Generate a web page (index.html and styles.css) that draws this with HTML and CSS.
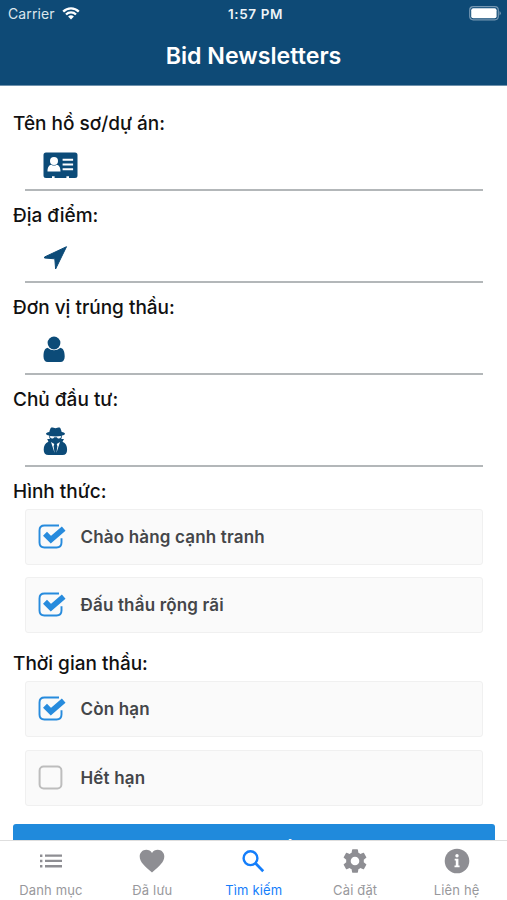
FILE: index.html
```html
<!DOCTYPE html>
<html lang="vi">
<head>
<meta charset="utf-8">
<meta name="viewport" content="width=device-width, initial-scale=1">
<title>Bid Newsletters</title>
<link rel="stylesheet" href="styles.css">
</head>
<body>
<div class="app">
  <header class="header">
    <div class="status">
      <div class="carrier"><span>Carrier</span>
        <svg width="18" height="13" viewBox="0 0 18 13" fill="none" stroke="#fff" stroke-width="2.3"><path d="M1.2 4.6a11 11 0 0 1 15.6 0M4 7.5a7 7 0 0 1 10 0"/><path d="M6.1 9.6a4.1 4.1 0 0 1 5.8 0L9 12.5z" fill="#fff" stroke="none"/></svg>
      </div>
      <time>1:57 PM</time>
      <svg class="battery" width="32" height="15" viewBox="0 0 32 15"><rect x=".7" y=".7" width="28.6" height="13.1" rx="3.5" fill="none" stroke="#7597b2" stroke-width="1.2"/><rect x="2.2" y="2.2" width="25.4" height="10" rx="2" fill="#fff"/><path d="M30.5 5v4.5q1.3-.6 1.3-2.2T30.5 5z" fill="#7597b2"/></svg>
    </div>
    <h1>Bid Newsletters</h1>
  </header>

  <main class="content">
    <div class="field"><label class="label">Tên hồ sơ/dự án:</label>
      <div class="input"><svg width="35" height="27" viewBox="0 0 35 27"><path fill="#0c4b78" d="M3 .5h29q2.500 0 2.500 2.500v20.500Q34.500 26 32 26h-6v-1.800h-2.600V26H11.600v-1.800H9V26H3Q.5 26 .5 23.500V3Q.5.5 3 .5z"/><g fill="#fff"><circle cx="11" cy="9" r="4"/><path d="M4.500 19.500c0-4.200 1.500-6.600 3.800-6.800q2.700 1.700 5.400 0c2.300.2 3.800 2.600 3.800 6.800z"/><path d="M19.600 6.800h10.500v2H19.600zM19.600 11.500h10.500v2H19.600zM19.600 16.200h10.500v2H19.600z"/></g></svg></div></div>
    <div class="field"><label class="label">Địa điểm:</label>
      <div class="input"><svg width="25" height="25" viewBox="0 0 25 25"><path fill="#0c4b78" stroke="#0c4b78" stroke-width="1" stroke-linejoin="round" d="M23.500 1.700 12.600 24 11.800 13.800 1.500 13 1.500 12z"/></svg></div></div>
    <div class="field"><label class="label">Đơn vị trúng thầu:</label>
      <div class="input"><svg width="23" height="27" viewBox="0 0 23 27"><g fill="#0c4b78"><circle cx="11" cy="7" r="6.400"/><path d="M4.500 11.700q6.500 5.300 13 0c3 .8 4.200 4 4.200 8.800 0 3.500-1.500 5.500-4.300 5.500H4.800C2 26 .5 24 .5 20.500c0-4.800 1-8 4-8.800z"/></g></svg></div></div>
    <div class="field"><label class="label">Chủ đầu tư:</label>
      <div class="input"><svg width="25" height="29" viewBox="0 0 25 29"><path fill="#0c4b78" d="M8 .8c1-.8 3 .4 4.500.4S16 0 17 .8c.8.900 1.300 2.700 1.700 4.200 2 .4 3.300 1 3.300 1.700 0 .9-1.500 1.500-3.300 2 .3 1.300 0 2.300-.5 3.300H21l-1.500 2.800c3.200 1.200 4.600 4 4.600 8 0 3.500-1.500 5.200-4.600 5.200h-14C2.300 28 .7 26.300.7 22.800c0-4 1.500-6.800 4.700-8L4.200 12H7c-.6-1-.9-2-.6-3.300C4.500 8.200 3 7.600 3 6.700 3 6 4.300 5.400 6.300 5 6.700 3.500 7.200 1.700 8 .8z"/><path fill="#fff" d="M7 9q5.500.8 11 0l-.3 1.800c-1.300 1.200-3.200 1-3.900-.6h-2.600c-.7 1.600-2.600 1.800-3.900.6zM8 15l3.300 2.100-.7 2.200 1 6.700zM17 15l-3.300 2.100.7 2.200-1 6.700z"/></svg></div></div>

    <section class="group"><h2 class="label">Hình thức:</h2>
      <div class="option"><svg width="29" height="26" viewBox="0 0 29 26"><path d="M21 1.500H6.500q-5 0-5 5v12q0 5 5 5h12q5 0 5-5v-4.200" fill="none" stroke="#278bdd" stroke-width="1.900"/><path d="m7 9.800 5.900 5.900L25.700 4.600" fill="none" stroke="#278bdd" stroke-width="5.600"/></svg><span>Chào hàng cạnh tranh</span></div>
      <div class="option"><svg width="29" height="26" viewBox="0 0 29 26"><path d="M21 1.500H6.500q-5 0-5 5v12q0 5 5 5h12q5 0 5-5v-4.200" fill="none" stroke="#278bdd" stroke-width="1.900"/><path d="m7 9.800 5.900 5.900L25.700 4.600" fill="none" stroke="#278bdd" stroke-width="5.600"/></svg><span>Đấu thầu rộng rãi</span></div>
    </section>
    <section class="group"><h2 class="label">Thời gian thầu:</h2>
      <div class="option"><svg width="29" height="26" viewBox="0 0 29 26"><path d="M21 1.500H6.500q-5 0-5 5v12q0 5 5 5h12q5 0 5-5v-4.200" fill="none" stroke="#278bdd" stroke-width="1.900"/><path d="m7 9.800 5.900 5.900L25.700 4.600" fill="none" stroke="#278bdd" stroke-width="5.600"/></svg><span>Còn hạn</span></div>
      <div class="option"><svg width="29" height="26" viewBox="0 0 29 26"><rect x="1.600" y="1.600" width="21.800" height="21.800" rx="4" fill="none" stroke="#bdbdbd" stroke-width="2"/></svg><span>Hết hạn</span></div>
    </section>
    <button class="submit">TÌM KIẾM</button>
  </main>

  <nav class="tabs">
    <a class="tab"><svg width="28" height="28" viewBox="0 0 28 28" fill="#8e8e93"><path d="M3 7.500h2.400v2.400H3zM3 12.800h2.400v2.400H3zM3 18.100h2.400v2.400H3zM8 7.500h17v2.300H8zM8 12.800h17v2.300H8zM8 18.100h17v2.300H8z"/></svg><span>Danh mục</span></a>
    <a class="tab"><svg width="28" height="28" viewBox="0 0 28 28" fill="#8e8e93"><path d="M14 25.500C7 19.500 1.700 15 1.700 9.500c0-4 3-6.800 6.500-6.800 2.500 0 4.600 1.200 5.800 3.200 1.200-2 3.300-3.200 5.800-3.200 3.600 0 6.500 2.800 6.500 6.800 0 5.500-5.300 10-12.300 16z"/></svg><span>Đã lưu</span></a>
    <a class="tab active"><svg width="28" height="28" viewBox="0 0 28 28" fill="none" stroke="#147efb"><circle cx="10.500" cy="11.200" r="6.900" stroke-width="2.400"/><path d="m15.500 16.300 7.700 7.900" stroke-width="2.700"/></svg><span>Tìm kiếm</span></a>
    <a class="tab"><svg width="28" height="28" viewBox="0 0 24 24" fill="#8e8e93"><path fill-rule="evenodd" d="M19.500 13a7.500 7.500 0 0 0 0-2l2.100-1.700a.5.5 0 0 0 .1-.6l-2-3.500a.5.5 0 0 0-.6-.2l-2.500 1a7.500 7.500 0 0 0-1.700-1l-.4-2.600a.5.5 0 0 0-.5-.4h-4a.5.5 0 0 0-.5.400L9.100 5a7.500 7.500 0 0 0-1.700 1l-2.500-1a.5.5 0 0 0-.6.2l-2 3.500a.5.5 0 0 0 .1.600L4.500 11a7.500 7.500 0 0 0 0 2l-2.100 1.700a.5.5 0 0 0-.1.600l2 3.500a.5.5 0 0 0 .6.200l2.500-1a7.500 7.500 0 0 0 1.700 1l.4 2.600a.5.5 0 0 0 .5.400h4a.5.5 0 0 0 .5-.4l.4-2.600a7.500 7.500 0 0 0 1.700-1l2.500 1a.5.5 0 0 0 .6-.2l2-3.500a.5.5 0 0 0-.1-.6zM12 15.700a3.700 3.700 0 1 1 0-7.400 3.700 3.700 0 0 1 0 7.400z"/></svg><span>Cài đặt</span></a>
    <a class="tab"><svg width="28" height="28" viewBox="0 0 28 28"><circle cx="14" cy="14" r="12.300" fill="#8e8e93"/><circle cx="14" cy="8.800" r="1.700" fill="#fff"/><path fill="#fff" d="M11.700 11.800h3.700v6.800h1.200v1.700h-5.100v-1.700h1.300v-5h-1.100z"/></svg><span>Liên hệ</span></a>
  </nav>
</div>
</body>
</html>
```
FILE: styles.css
```css
* { box-sizing: border-box; }
body { margin: 0; background: #fff; font-family: Inter, "Liberation Sans", sans-serif; color: #111; }
svg { display: block; flex: none; }
.app { height: 900px; display: flex; flex-direction: column; overflow: hidden; }
.header { flex: none; height: 86px; background: #0e4a76; color: #fff; border-bottom: 1px solid #6e91ac; }
.status { height: 27px; padding: 0 6px 0 8px; display: grid; grid-template-columns: 1fr auto 1fr; align-items: center; font-size: 14px; }
.carrier { display: flex; align-items: center; gap: 7px; color: #dce6ed; letter-spacing: .12px; }
.status time { padding-left: 2px; font-weight: 600; font-size: 13.5px; letter-spacing: .6px; color: #edf3f7; }
.battery { justify-self: end; }
h1 { margin: 13px 0 0; font-size: 23.2px; line-height: 32px; font-weight: 600; text-align: center; }
.content { flex: 1; min-height: 0; overflow: hidden; padding: 26px 12px 0 13px; }
.label { display: block; margin: 0; height: 24px; line-height: 24px; font-size: 19px; font-weight: 500; white-space: nowrap; }
.input { height: 55px; margin: 0 12px; padding: 5px 0 0 18px; display: flex; align-items: center; border-bottom: 2px solid #b3b7b9; }
.field + .field, .group { margin-top: 13px; }
.group { margin-bottom: 18px; }
.group + .group { margin-top: 19px; }
.group .label { margin-bottom: 5px; }
.option { height: 56px; margin: 0 12px; padding-left: 12px; display: flex; align-items: center; gap: 14px; background: #fafafa; border: 1px solid #f0f0f0; border-radius: 3px; font-size: 17px; letter-spacing: .17px; font-weight: 600; color: #444649; }
.option span { margin-left: -.5px; }
.option + .option { margin-top: 12.4px; }
.submit { display: block; width: 100%; height: 58px; border: 0; border-radius: 3px; background: #208adc; color: #fff; font: 600 22px/62px Inter, sans-serif; letter-spacing: 2px; padding: 0 0 0 8px; }
.tabs { flex: none; height: 60px; padding-top: 6px; background: #fff; border-top: 1px solid #dedede; display: grid; grid-template-columns: repeat(5, 1fr); }
.tab { display: flex; flex-direction: column; align-items: center; gap: 7px; padding-left: .6px; font-size: 13px; line-height: 17px; color: #98989c; letter-spacing: .15px; }
.tab.active { color: #147efb; }
```
